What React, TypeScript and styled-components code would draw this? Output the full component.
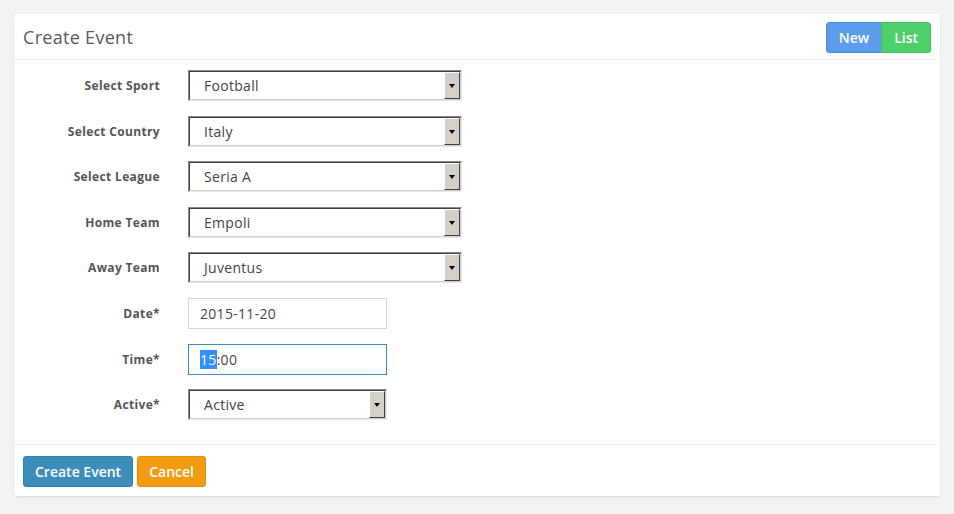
import * as React from 'react';
import styled, { createGlobalStyle } from 'styled-components';

const GlobalStyle = createGlobalStyle`
    html, body {
        margin: 0;
        padding: 0;
        background: #f3f3f3;
        font-family: 'Open Sans', 'DejaVu Sans', sans-serif;
        color: #555;
    }
`;

const Page = styled.div`
    padding: 14px 14px 19px 14px;
`;

const Box = styled.div`
    background: #fff;
    border-radius: 3px;
    box-shadow: 0 1px 2px rgba(0, 0, 0, 0.12);
`;

const Header = styled.div`
    display: flex;
    align-items: center;
    justify-content: space-between;
    height: 45px;
    padding: 0 9px;
    border-bottom: 1px solid #f0f0f0;
`;

const Title = styled.h3`
    margin: 0;
    font-size: 18px;
    font-weight: 400;
    color: #5a5a5a;
    letter-spacing: 0.3px;
`;

const ButtonGroup = styled.div`
    display: flex;
    margin-top: 1px;
`;

const GroupButton = styled.button<{ $bg: string; $border: string; $first?: boolean }>`
    height: 31px;
    padding: 0 12px;
    border: 1px solid ${(p) => p.$border};
    background: ${(p) => p.$bg};
    color: #fff;
    font-family: inherit;
    font-size: 14px;
    font-weight: 600;
    border-radius: ${(p) => (p.$first ? '3px 0 0 3px' : '0 3px 3px 0')};
    margin-left: ${(p) => (p.$first ? '0' : '-1px')};
`;

const Form = styled.div`
    display: flex;
    flex-direction: column;
    gap: 14.6px;
    padding: 10px 0 24px 0;
    border-bottom: 1px solid #f0f0f0;
`;

const Row = styled.div`
    display: flex;
    align-items: center;
    height: 31px;
`;

const Label = styled.label`
    width: 146px;
    text-align: right;
    font-size: 12px;
    font-weight: 700;
    letter-spacing: 0.35px;
    color: #555;
    margin-right: 28px;
`;

const Select = styled.div<{ $width: number }>`
    display: flex;
    width: ${(p) => p.$width}px;
    height: 31px;
    box-sizing: border-box;
    border-top: 1px solid #8a8a8a;
    border-left: 1px solid #8a8a8a;
    border-right: 1px solid #e8e8e8;
    border-bottom: 1px solid #e8e8e8;
`;

const SelectInner = styled.div`
    flex: 1;
    display: flex;
    border-top: 1px solid #404040;
    border-left: 1px solid #404040;
    border-right: 1px solid #d4d0c8;
    border-bottom: 1px solid #d4d0c8;
`;

const SelectValue = styled.div`
    flex: 1;
    display: flex;
    align-items: center;
    padding-left: 14px;
    font-size: 14px;
    letter-spacing: 0.3px;
    color: #444;
`;

const ArrowButton = styled.div`
    width: 16px;
    display: flex;
    align-items: center;
    justify-content: center;
    background: #d4d0c8;
    box-sizing: border-box;
    border-top: 1px solid #fff;
    border-left: 1px solid #fff;
    border-right: 1px solid #404040;
    border-bottom: 1px solid #404040;
`;

const Arrow = styled.span`
    width: 0;
    height: 0;
    border-left: 3.5px solid transparent;
    border-right: 3.5px solid transparent;
    border-top: 4px solid #000;
    margin-top: 1px;
`;

const TextInput = styled.div<{ $focus?: boolean }>`
    width: 199px;
    height: 31px;
    box-sizing: border-box;
    display: flex;
    align-items: center;
    padding-left: 11px;
    font-size: 14px;
    letter-spacing: 0.3px;
    color: #444;
    border: 1px solid ${(p) => (p.$focus ? '#3c8dbc' : '#d2d6de')};
`;

const Selected = styled.span`
    background: #3390ff;
    color: #fff;
`;

const Footer = styled.div`
    display: flex;
    gap: 4px;
    padding: 11px 9px 9px 9px;
`;

const ActionButton = styled.button<{ $bg: string; $border: string }>`
    height: 31px;
    padding: 0 11px;
    border: 1px solid ${(p) => p.$border};
    background: ${(p) => p.$bg};
    color: #fff;
    font-family: inherit;
    font-size: 14px;
    font-weight: 600;
    border-radius: 3px;
`;

const selects: [string, string][] = [
    ['Select Sport', 'Football'],
    ['Select Country', 'Italy'],
    ['Select League', 'Seria A'],
    ['Home Team', 'Empoli'],
    ['Away Team', 'Juventus'],
];

const SelectBox: React.FC<{ value: string; width: number }> = ({ value, width }) => (
    <Select $width={width}>
        <SelectInner>
            <SelectValue>{value}</SelectValue>
            <ArrowButton>
                <Arrow />
            </ArrowButton>
        </SelectInner>
    </Select>
);

const App: React.FC = () => {
    return (
        <Page>
            <GlobalStyle />
            <Box>
                <Header>
                    <Title>Create Event</Title>
                    <ButtonGroup>
                        <GroupButton $first $bg="#5d9cec" $border="#4a8bdc">
                            New
                        </GroupButton>
                        <GroupButton $bg="#4dd06b" $border="#42c45f">
                            List
                        </GroupButton>
                    </ButtonGroup>
                </Header>
                <Form>
                    {selects.map(([label, value]) => (
                        <Row key={label}>
                            <Label>{label}</Label>
                            <SelectBox value={value} width={274} />
                        </Row>
                    ))}
                    <Row>
                        <Label>Date*</Label>
                        <TextInput>2015-11-20</TextInput>
                    </Row>
                    <Row>
                        <Label>Time*</Label>
                        <TextInput $focus>
                            <Selected>15</Selected>:00
                        </TextInput>
                    </Row>
                    <Row>
                        <Label>Active*</Label>
                        <SelectBox value="Active" width={199} />
                    </Row>
                </Form>
                <Footer>
                    <ActionButton $bg="#3c8dbc" $border="#367fa9">
                        Create Event
                    </ActionButton>
                    <ActionButton $bg="#f39c12" $border="#e08e0b">
                        Cancel
                    </ActionButton>
                </Footer>
            </Box>
        </Page>
    );
};

export default App;
